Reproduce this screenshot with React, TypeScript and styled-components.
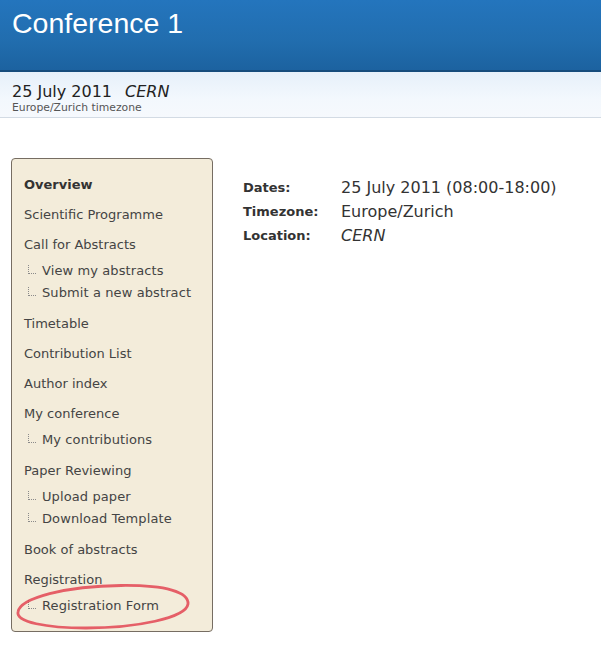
import React from "react";
import styled, { createGlobalStyle } from "styled-components";

const Global = createGlobalStyle`
  html, body { margin: 0; padding: 0; background: #ffffff; }
  body { font-family: "DejaVu Sans", Verdana, sans-serif; }
  * { box-sizing: border-box; }
`;

const Header = styled.header`
  height: 72px;
  background: linear-gradient(to bottom, #2475bd 0%, #216dae 60%, #1c62a0 100%);
  border-bottom: 2px solid #164c7c;
  padding: 5px 0 0 12px;
`;

const Title = styled.h1`
  margin: 0;
  font-family: "Liberation Sans", Arial, sans-serif;
  font-weight: normal;
  font-size: 28.5px;
  line-height: 36px;
  color: #ffffff;
`;

const SubHeader = styled.div`
  height: 46px;
  background: linear-gradient(to bottom, #e6f0fa 0%, #f3f8fd 60%, #f6f9fd 100%);
  border-bottom: 1px solid #d3dbe4;
  padding: 10px 0 0 12px;
`;

const DateLine = styled.div`
  font-size: 16px;
  line-height: 20px;
  color: #222;
`;

const Place = styled.em`
  margin-left: 13px;
`;

const TzLine = styled.div`
  font-size: 10.8px;
  line-height: 12px;
  color: #555;
`;

const Main = styled.main`
  display: flex;
  align-items: flex-start;
  gap: 30px;
  padding: 40px 0 0 11px;
`;

const Sidebar = styled.nav`
  width: 202px;
  background: #f3ecda;
  border: 1px solid #766d62;
  border-radius: 4px;
  padding: 15px 12px 13px;
`;

const Section = styled.div`
  & + & { margin-top: 8px; }
`;

const TopItem = styled.div<{ $bold?: boolean }>`
  font-size: 13px;
  line-height: 22px;
  color: ${(p) => (p.$bold ? "#333" : "#444")};
  font-weight: ${(p) => (p.$bold ? "bold" : "normal")};
  white-space: nowrap;
`;

const SubList = styled.div`
  padding: 4px 0 1px;
`;

const SubItem = styled.div`
  position: relative;
  font-size: 13px;
  line-height: 22px;
  color: #444;
  padding-left: 18px;
  letter-spacing: 0.1px;
  white-space: nowrap;
  &::before {
    content: "";
    position: absolute;
    left: 4px;
    top: 5px;
    width: 7px;
    height: 8px;
    border-left: 1px dotted #8a8a8a;
    border-bottom: 1px dotted #8a8a8a;
  }
`;

const Highlight = styled.svg`
  position: absolute;
  left: -8px;
  top: -11px;
  width: 174px;
  height: 46px;
  pointer-events: none;
  overflow: visible;
`;

const Details = styled.div`
  padding-top: 17px;
  display: grid;
  grid-template-columns: 98px auto;
  grid-auto-rows: 24px;
  align-items: center;
`;

const Label = styled.div`
  font-size: 13px;
  font-weight: bold;
  color: #333;
`;

const Value = styled.div<{ $italic?: boolean }>`
  font-size: 16px;
  color: #333;
  font-style: ${(p) => (p.$italic ? "italic" : "normal")};
  white-space: nowrap;
`;

type Sec = { title: string; bold?: boolean; subs?: string[] };

const sections: Sec[] = [
  { title: "Overview", bold: true },
  { title: "Scientific Programme" },
  { title: "Call for Abstracts", subs: ["View my abstracts", "Submit a new abstract"] },
  { title: "Timetable" },
  { title: "Contribution List" },
  { title: "Author index" },
  { title: "My conference", subs: ["My contributions"] },
  { title: "Paper Reviewing", subs: ["Upload paper", "Download Template"] },
  { title: "Book of abstracts" },
  { title: "Registration", subs: ["Registration Form"] },
];

export default function App() {
  return (
    <>
      <Global />
      <Header>
        <Title>Conference 1</Title>
      </Header>
      <SubHeader>
        <DateLine>
          25 July 2011<Place>CERN</Place>
        </DateLine>
        <TzLine>Europe/Zurich timezone</TzLine>
      </SubHeader>
      <Main>
        <Sidebar>
          {sections.map((s) => (
            <Section key={s.title}>
              <TopItem $bold={s.bold}>{s.title}</TopItem>
              {s.subs && (
                <SubList>
                  {s.subs.map((sub) => (
                    <SubItem key={sub}>
                      {sub}
                      {sub === "Registration Form" && (
                        <Highlight viewBox="0 0 174 46">
                          <defs>
                            <filter id="soft" x="-10%" y="-30%" width="120%" height="160%">
                              <feGaussianBlur stdDeviation="0.7" />
                            </filter>
                          </defs>
                          <path
                            d="M2 28 C4 14 50 2 105 1.5 C150 1 173 8 172 20 C170 34 120 44 70 44 C30 44 0 38 2 28 Z"
                            fill="none"
                            stroke="#e23c4c"
                            strokeWidth="2.8"
                            opacity="0.8"
                            filter="url(#soft)"
                          />
                        </Highlight>
                      )}
                    </SubItem>
                  ))}
                </SubList>
              )}
            </Section>
          ))}
        </Sidebar>
        <Details>
          <Label>Dates:</Label>
          <Value>25 July 2011 (08:00-18:00)</Value>
          <Label>Timezone:</Label>
          <Value>Europe/Zurich</Value>
          <Label>Location:</Label>
          <Value $italic>CERN</Value>
        </Details>
      </Main>
    </>
  );
}
